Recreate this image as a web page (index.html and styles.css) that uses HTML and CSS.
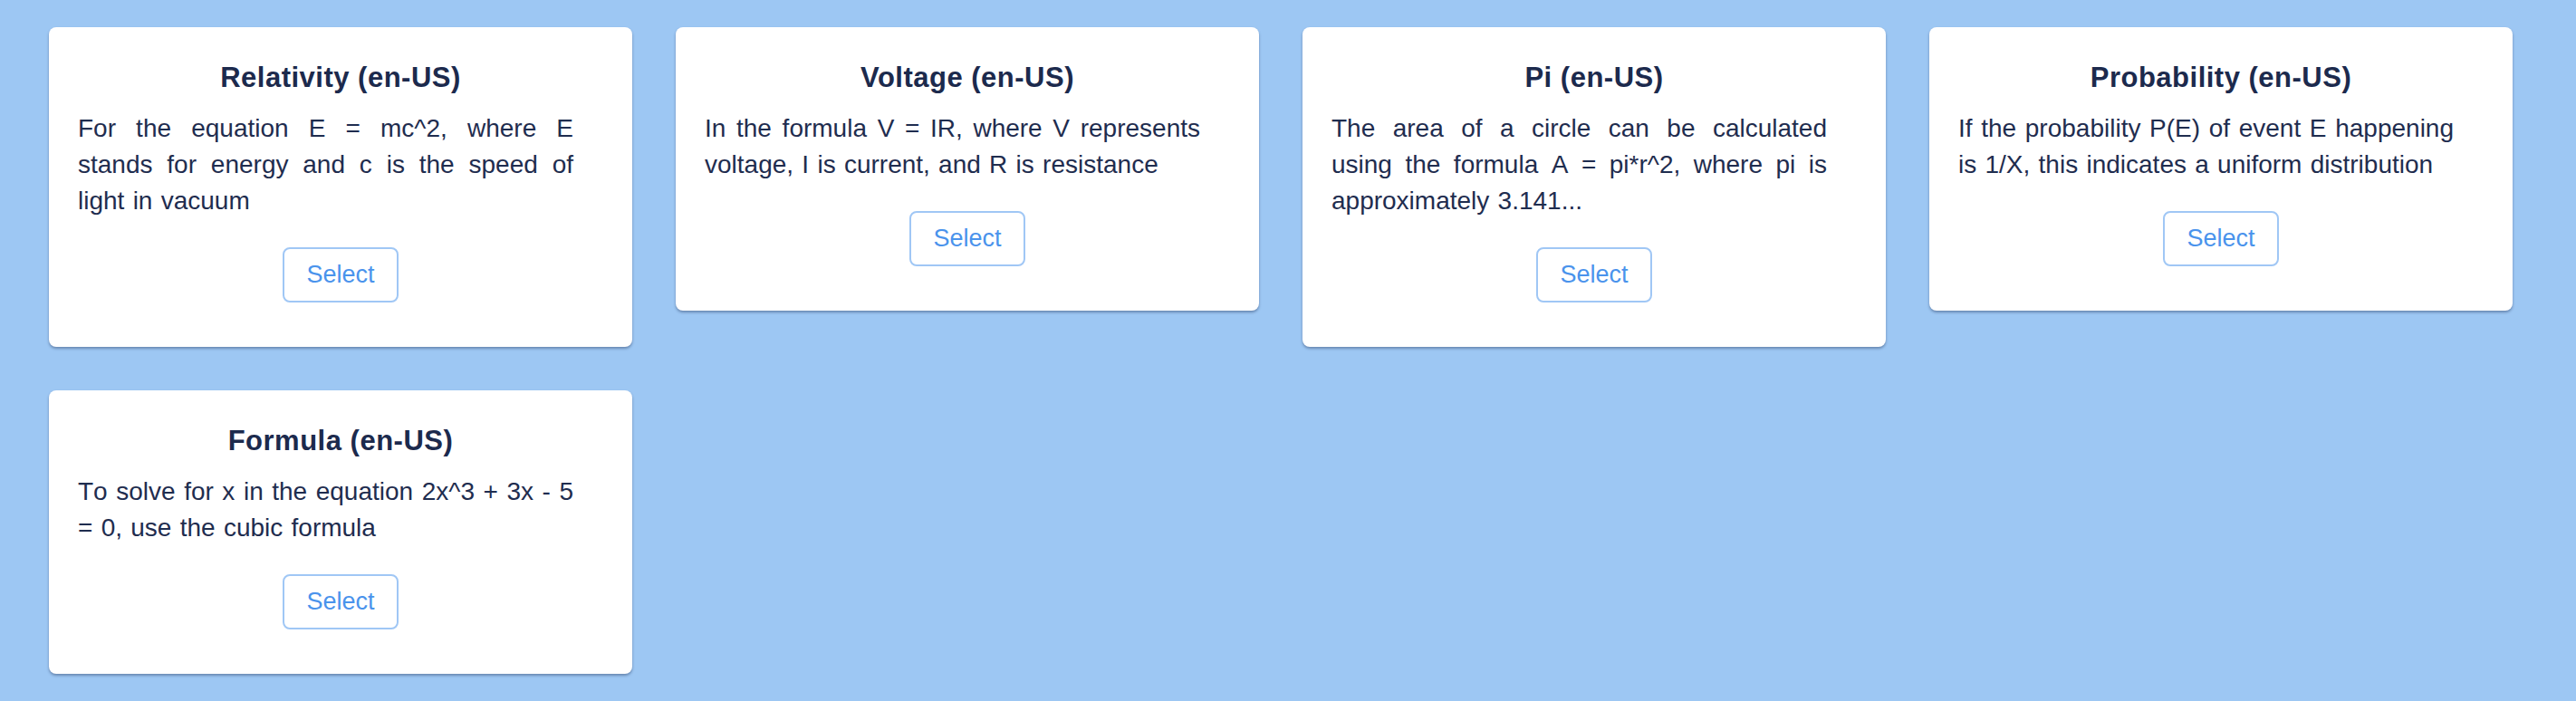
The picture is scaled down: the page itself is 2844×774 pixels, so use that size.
FILE: index.html
```html
<!DOCTYPE html>
<html lang="en">
<head>
<meta charset="utf-8">
<title>Cards</title>
<link rel="stylesheet" href="styles.css">
</head>
<body>
<main class="grid">
  <section class="card">
    <h2 class="card-title">Relativity (en-US)</h2>
    <p class="card-text">For the equation E = mc^2, where E stands for energy and c is the speed of light in vacuum</p>
    <button class="select-btn">Select</button>
  </section>
  <section class="card">
    <h2 class="card-title">Voltage (en-US)</h2>
    <p class="card-text">In the formula V = IR, where V represents voltage, I is current, and R is resistance</p>
    <button class="select-btn">Select</button>
  </section>
  <section class="card">
    <h2 class="card-title">Pi (en-US)</h2>
    <p class="card-text">The area of a circle can be calculated using the formula A = pi*r^2, where pi is approximately 3.141...</p>
    <button class="select-btn">Select</button>
  </section>
  <section class="card">
    <h2 class="card-title">Probability (en-US)</h2>
    <p class="card-text">If the probability P(E) of event E happening is 1/X, this indicates a uniform distribution</p>
    <button class="select-btn">Select</button>
  </section>
  <section class="card">
    <h2 class="card-title">Formula (en-US)</h2>
    <p class="card-text">To solve for x in the equation 2x^3 + 3x - 5 = 0, use the cubic formula</p>
    <button class="select-btn">Select</button>
  </section>
</main>
</body>
</html>
```
FILE: styles.css
```css
* { box-sizing: border-box; }
html, body {
  margin: 0;
  padding: 0;
  background: #9dc7f3;
}
body {
  font-family: "Liberation Sans", Arial, Helvetica, sans-serif;
  color: #1d2a4b;
}
.grid {
  display: grid;
  grid-template-columns: repeat(4, 644px);
  column-gap: 48px;
  row-gap: 48px;
  align-items: start;
  padding: 30px 70px 30px 54px;
}
.card {
  background: #ffffff;
  border-radius: 8px;
  box-shadow: 0 2px 3px rgba(40, 60, 100, 0.45);
  padding: 38px 32px 49px 32px;
  display: flex;
  flex-direction: column;
  align-items: center;
}
.card-title {
  margin: 0;
  font-size: 31px;
  line-height: 36px;
  letter-spacing: 0.5px;
  font-weight: 700;
  text-align: center;
  color: #1c2a4d;
  align-self: stretch;
}
.card-text {
  margin: 18px 0 0 0;
  width: 547px;
  align-self: flex-start;
  font-size: 28px;
  line-height: 40px;
  word-spacing: 1.5px;
  font-kerning: none;
  text-align: justify;
  color: #1f2d4f;
}
.select-btn {
  margin-top: 31px;
  font-family: "Liberation Sans", Arial, Helvetica, sans-serif;
  font-size: 27px;
  line-height: 31px;
  padding: 13px 24px;
  color: #4a93ec;
  background: #ffffff;
  border: 2px solid #a0c7f5;
  border-radius: 8px;
  cursor: pointer;
}
```
